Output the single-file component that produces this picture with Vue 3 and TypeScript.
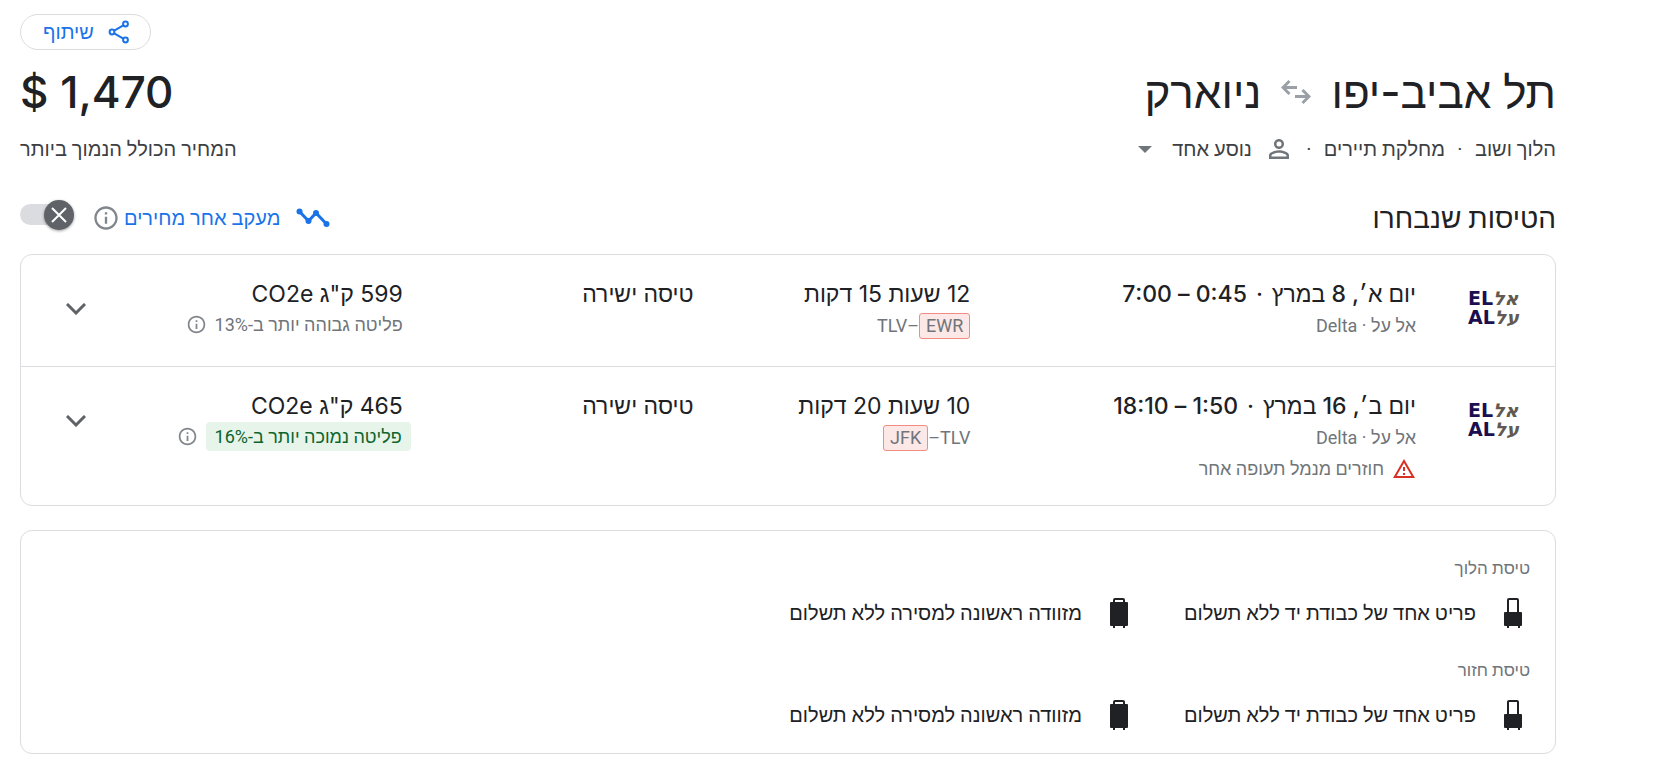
<script setup lang="ts">
interface Airport {
  code: string
  flagged: boolean
}

interface Leg {
  id: string
  date: string
  times: string
  airlines: string
  warning?: string
  duration: string
  route: Airport[]
  stops: string
  emissions: string
  comparison: string
  lower: boolean
}

interface BagGroup {
  id: string
  title: string
  carryOn: string
  checked: string
}

const legs: Leg[] = [
  {
    id: 'outbound',
    date: 'יום א׳, 8 במרץ',
    times: '0:45 – 7:00',
    airlines: 'אל על · Delta',
    duration: '12 שעות 15 דקות',
    route: [
      { code: 'EWR', flagged: true },
      { code: 'TLV', flagged: false },
    ],
    stops: 'טיסה ישירה',
    emissions: '599 ק"ג CO2e',
    comparison: 'פליטה גבוהה יותר ב-13%',
    lower: false,
  },
  {
    id: 'return',
    date: 'יום ב׳, 16 במרץ',
    times: '1:50 – 18:10',
    airlines: 'אל על · Delta',
    warning: 'חוזרים מנמל תעופה אחר',
    duration: '10 שעות 20 דקות',
    route: [
      { code: 'TLV', flagged: false },
      { code: 'JFK', flagged: true },
    ],
    stops: 'טיסה ישירה',
    emissions: '465 ק"ג CO2e',
    comparison: 'פליטה נמוכה יותר ב-16%',
    lower: true,
  },
]

const bags: BagGroup[] = [
  {
    id: 'outbound',
    title: 'טיסת הלוך',
    carryOn: 'פריט אחד של כבודת יד ללא תשלום',
    checked: 'מזוודה ראשונה למסירה ללא תשלום',
  },
  {
    id: 'return',
    title: 'טיסת חזור',
    carryOn: 'פריט אחד של כבודת יד ללא תשלום',
    checked: 'מזוודה ראשונה למסירה ללא תשלום',
  },
]
</script>

<template>
  <main class="page" dir="rtl">
    <div class="actions">
      <button class="share" type="button">
        <svg width="24" height="24" viewBox="0 0 24 24" fill="none" stroke="currentColor" stroke-width="2">
          <circle cx="18.5" cy="4" r="2.4" />
          <circle cx="5" cy="12" r="2.4" />
          <circle cx="18.5" cy="20" r="2.4" />
          <path d="M7.200 10.700 16.300 5.300M7.200 13.300l9.100 5.400" />
        </svg>
        <span>שיתוף</span>
      </button>
    </div>

    <header class="summary">
      <h1 class="title">
        <span>תל אביב-יפו</span>
        <svg class="swap" width="30" height="30" viewBox="0 0 30 30" fill="none" stroke="currentColor" stroke-width="3">
          <path d="M16 10.500H2.500M8.500 4 2 10.500 8.500 17M14 19.500H27.500M21.500 13 28 19.500 21.500 26" />
        </svg>
        <span>ניוארק</span>
      </h1>
      <div class="price">1,470 $</div>
      <div class="trip">
        <span>הלוך ושוב</span>
        <span class="sep">·</span>
        <span>מחלקת תיירים</span>
        <span class="sep">·</span>
        <button class="travelers" type="button">
          <svg width="30" height="30" viewBox="0 0 24 24" fill="currentColor">
            <path d="M12 6a2 2 0 1 1 0 4 2 2 0 0 1 0-4m0 9c2.700 0 5.800 1.290 6 2v1H6v-.990c.200-.720 3.300-2.010 6-2.010m0-11C9.790 4 8 5.790 8 8s1.790 4 4 4 4-1.790 4-4-1.790-4-4-4zm0 9c-2.670 0-8 1.340-8 4v3h16v-3c0-2.660-5.330-4-8-4z" />
          </svg>
          <span>נוסע אחד</span>
          <svg class="caret" width="14" height="7" viewBox="0 0 14 7" fill="currentColor">
            <path d="M0 0h14L7 7z" />
          </svg>
        </button>
      </div>
      <div class="price-note">המחיר הכולל הנמוך ביותר</div>
    </header>

    <div class="section-head">
      <h2 class="section-title">הטיסות שנבחרו</h2>
      <div class="track">
        <svg class="trend" width="34" height="20" viewBox="0 0 34 20" fill="currentColor">
          <path d="M3.500 3.500 12.500 13 20 5 30.500 16" fill="none" stroke="currentColor" stroke-width="3" />
          <circle cx="3.500" cy="3.500" r="3" />
          <circle cx="12.500" cy="13" r="3" />
          <circle cx="20" cy="5" r="3" />
          <circle cx="30.500" cy="16" r="3" />
        </svg>
        <label class="track-label" for="track-prices">מעקב אחר מחירים</label>
        <button class="info" type="button" aria-label="מידע נוסף">
          <svg width="28" height="28" viewBox="0 0 24 24" fill="currentColor">
            <path d="M11 7h2v2h-2zm0 4h2v6h-2zm1-9C6.480 2 2 6.480 2 12s4.480 10 10 10 10-4.480 10-10S17.520 2 12 2zm0 18c-4.410 0-8-3.590-8-8s3.590-8 8-8 8 3.590 8 8-3.590 8-8 8z" />
          </svg>
        </button>
        <span class="switch">
          <input id="track-prices" type="checkbox" role="switch" />
          <span class="thumb">
            <svg width="16" height="16" viewBox="0 0 16 16" fill="none" stroke="currentColor" stroke-width="2">
              <path d="M1 1l14 14M15 1 1 15" />
            </svg>
          </span>
        </span>
      </div>
    </div>

    <section class="card">
      <article v-for="leg in legs" :key="leg.id" class="leg">
        <div class="logo" dir="ltr">
          <div><span class="latin">EL</span><span class="hebrew">אל</span></div>
          <div><span class="latin">AL</span><span class="hebrew">על</span></div>
        </div>
        <div class="cell">
          <div class="main strong">
            <span>{{ leg.date }}</span>
            <span class="dot">·</span>
            <span>{{ leg.times }}</span>
          </div>
          <div class="sub">{{ leg.airlines }}</div>
          <div v-if="leg.warning" class="sub warning">
            <svg width="24" height="24" viewBox="0 0 24 24" fill="currentColor">
              <path d="M12 5.990 19.530 19H4.470L12 5.990M12 2 1 21h22L12 2zm1 14h-2v2h2v-2zm0-6h-2v4h2v-4z" />
            </svg>
            <span>{{ leg.warning }}</span>
          </div>
        </div>
        <div class="cell">
          <div class="main">{{ leg.duration }}</div>
          <div class="sub route">
            <template v-for="(airport, i) in leg.route" :key="airport.code">
              <span v-if="i > 0">–</span>
              <span :class="{ flagged: airport.flagged }">{{ airport.code }}</span>
            </template>
          </div>
        </div>
        <div class="cell">
          <div class="main">{{ leg.stops }}</div>
        </div>
        <div class="cell">
          <div class="main">{{ leg.emissions }}</div>
          <div class="emission">
            <span :class="{ lower: leg.lower }">{{ leg.comparison }}</span>
            <button class="info" type="button" aria-label="מידע על פליטות">
              <svg width="21" height="21" viewBox="0 0 24 24" fill="currentColor">
                <path d="M11 7h2v2h-2zm0 4h2v6h-2zm1-9C6.480 2 2 6.480 2 12s4.480 10 10 10 10-4.480 10-10S17.520 2 12 2zm0 18c-4.410 0-8-3.590-8-8s3.590-8 8-8 8 3.590 8 8-3.590 8-8 8z" />
              </svg>
            </button>
          </div>
        </div>
        <button class="expand" type="button" aria-label="פרטי הטיסה">
          <svg width="20" height="12" viewBox="0 0 20 12" fill="none" stroke="currentColor" stroke-width="3">
            <path d="M1 1l9 9 9-9" />
          </svg>
        </button>
      </article>
    </section>

    <section class="card bags">
      <div v-for="group in bags" :key="group.id" class="bag-group">
        <h3 class="bag-title">{{ group.title }}</h3>
        <ul class="bag-list">
          <li>
            <svg width="18" height="30" viewBox="0 0 18 30" fill="currentColor">
              <path d="M5 0h8a2 2 0 0 1 2 2v12h2a1 1 0 0 1 1 1v12a1 1 0 0 1-1 1h-1v2h-2v-2H5v2H3v-2H1a1 1 0 0 1-1-1V15a1 1 0 0 1 1-1h2V2a2 2 0 0 1 2-2zM5 2v12h8V2z" fill-rule="evenodd" />
            </svg>
            <span>{{ group.carryOn }}</span>
          </li>
          <li>
            <svg width="18" height="30" viewBox="0 0 18 30" fill="currentColor">
              <path d="M5 0h8a2 2 0 0 1 2 2v2h2a1 1 0 0 1 1 1v22a1 1 0 0 1-1 1h-2v2h-2v-2H5v2H3v-2H1a1 1 0 0 1-1-1V5a1 1 0 0 1 1-1h2V2a2 2 0 0 1 2-2zM5 2v2h8V2z" fill-rule="evenodd" />
            </svg>
            <span>{{ group.checked }}</span>
          </li>
        </ul>
      </div>
    </section>
  </main>
</template>

<style>
body {
  margin: 0;
  background: #fff;
}
</style>

<style scoped>
.page {
  margin: 0 111px 0 20px;
  padding: 14px 0;
  color: #202124;
  font-family: Roboto, 'Liberation Sans', Arial, sans-serif;
  font-size: 20px;
  line-height: 24px;
}

button {
  display: inline-flex;
  align-items: center;
  margin: 0;
  padding: 0;
  border: 0;
  background: none;
  color: inherit;
  font: inherit;
  cursor: pointer;
}

svg {
  display: block;
  flex: none;
}

h1,
h2,
h3,
ul {
  margin: 0;
  padding: 0;
  font-weight: 400;
  list-style: none;
}

.actions {
  display: flex;
  justify-content: flex-end;
}

.share {
  height: 36px;
  gap: 13px;
  padding: 0 19px 0 22px;
  border: 1px solid #dadce0;
  border-radius: 18px;
  color: #1a73e8;
}

.summary {
  display: grid;
  grid-template-columns: 1fr auto;
  row-gap: 14px;
  padding-top: 14px;
  align-items: center;
}

.title,
.price {
  font-family: Inter, 'Liberation Sans', Arial, sans-serif;
  font-size: 44px;
  line-height: 56px;
  font-weight: 500;
}

.title {
  display: flex;
  align-items: center;
  gap: 20px;
}

.price {
  text-align: left;
}

.swap {
  color: #9aa0a6;
}

.trip {
  display: flex;
  align-items: center;
  height: 30px;
  color: #3c4043;
}

.sep {
  width: 30px;
  text-align: center;
}

.travelers {
  gap: 12px;
}

.travelers svg {
  color: #70757a;
}

.travelers .caret {
  margin-right: 8px;
}

.price-note {
  color: #3c4043;
  text-align: left;
}

.section-head {
  display: flex;
  align-items: flex-start;
  justify-content: space-between;
  padding: 33px 0 13px;
}

.section-title {
  font-size: 28px;
  line-height: 44px;
  font-weight: 500;
}

.track {
  display: flex;
  align-items: center;
  height: 36px;
  padding-top: 3px;
  color: #1a73e8;
}

.track-label {
  margin: 0 16px 0 4px;
}

.info {
  color: #80868b;
}

.switch {
  position: relative;
  display: block;
  align-self: flex-start;
  width: 54px;
  height: 30px;
  margin-right: 18px;
}

.switch input {
  appearance: none;
  display: block;
  width: 46px;
  height: 21px;
  margin: 4px 8px 0 0;
  border-radius: 11px;
  background: #dadce0;
  cursor: pointer;
}

.thumb {
  position: absolute;
  top: 0;
  right: 0;
  display: grid;
  place-items: center;
  width: 30px;
  height: 30px;
  border-radius: 50%;
  background: #5f6368;
  box-shadow: 0 1px 3px rgba(0, 0, 0, 0.4);
  color: #fff;
  pointer-events: none;
}

.card {
  border: 1px solid #dadce0;
  border-radius: 12px;
}

.leg {
  display: grid;
  grid-template-columns: 139px 446fr 277fr 291fr 272fr 110px;
  align-items: start;
  box-sizing: border-box;
  min-height: 111px;
  padding: 23px 0 21px;
}

.leg + .leg {
  border-top: 1px solid #dadce0;
}

.logo {
  justify-self: start;
  padding: 11px 36px 0 0;
  font-family: 'DejaVu Sans', sans-serif;
  font-size: 19px;
  line-height: 19px;
  font-weight: 700;
}

.latin {
  color: #1b0f4f;
}

.hebrew {
  color: #625a50;
  font-style: italic;
}

.main {
  font-family: Inter, 'Liberation Sans', Arial, sans-serif;
  font-size: 23px;
  line-height: 32px;
}

.strong {
  font-weight: 500;
}

.dot {
  margin: 0 9px;
}

.sub {
  color: #70757a;
  font-size: 18px;
  line-height: 31px;
}

.warning {
  display: flex;
  align-items: center;
  gap: 8px;
}

.warning svg {
  color: #d93025;
}

.route {
  display: flex;
  align-items: center;
}

.flagged {
  padding: 0 6px;
  border: 1px solid #f28b82;
  border-radius: 3px;
  background: #fce8e6;
  line-height: 24px;
}

.emission {
  display: flex;
  align-items: center;
  gap: 8px;
  color: #70757a;
  font-size: 18px;
  line-height: 29px;
}

.lower {
  margin-right: -8px;
  padding: 0 9px;
  border-radius: 4px;
  background: #e6f4ea;
  color: #0d652d;
}

.expand {
  align-self: start;
  justify-self: center;
  padding-top: 25px;
  color: #5f6368;
}

.bags {
  margin-top: 24px;
  padding: 25px 25px 23px;
}

.bag-group + .bag-group {
  margin-top: 30px;
}

.bag-title {
  color: #70757a;
  font-size: 17px;
  line-height: 24px;
}

.bag-list {
  display: flex;
  gap: 56px;
  padding-top: 18px;
}

.bag-list li {
  display: flex;
  align-items: center;
  gap: 28px;
}

.bag-list li:first-child {
  padding-right: 8px;
}
</style>
